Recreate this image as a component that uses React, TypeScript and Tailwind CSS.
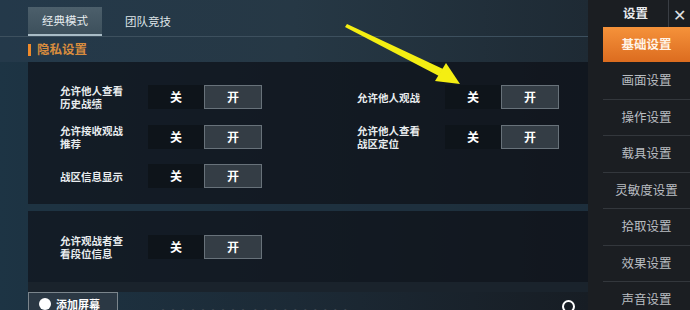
import React from "react";

const font = { fontFamily: '"Noto Sans CJK SC", "Noto Sans", sans-serif' };

function Toggle() {
  return (
    <div className="flex h-[24px] w-[114px] text-[12px] font-bold text-white">
      <div className="flex w-[56px] items-center justify-center bg-[#0e141a]">关</div>
      <div className="flex flex-1 items-center justify-center border border-[#68727a] bg-[#343d45]">开</div>
    </div>
  );
}

function Row({ label }: { label: string[] }) {
  return (
    <div className="flex items-center">
      <div className="w-[88px] text-[10.5px] font-bold leading-[13px] text-[#e8ecee]">
        {label.map((l) => (
          <div key={l}>{l}</div>
        ))}
      </div>
      <Toggle />
    </div>
  );
}

const menu = ["画面设置", "操作设置", "载具设置", "灵敏度设置", "拾取设置", "效果设置", "声音设置"];

function Arrow() {
  return (
    <svg className="pointer-events-none absolute left-0 top-0" width="690" height="310" aria-hidden>
      <polygon points="345,27 347,24 443,69 439,76" fill="#f4ee12" />
      <polygon points="460,84 435,81 446,63" fill="#f4ee12" />
    </svg>
  );
}

export default function App() {
  return (
    <div className="relative flex h-[310px] w-[690px] overflow-hidden bg-[#161b20]" style={font}>
      <div className="w-[588px] shrink-0 bg-gradient-to-r from-[#1d3444] via-[#1c2a36] to-[#171d24]">
        <div className="bg-gradient-to-r from-[#24394a] via-[#263845] to-[#1e2a34]">
          <div className="flex h-[37px] items-end border-b border-[#3d505e] pl-[28px]">
            <div className="flex h-[29px] w-[74px] items-center justify-center border-b-2 border-[#a9bcc6] bg-gradient-to-b from-[#4c5f6b] to-[#3d505c] text-[11.5px] text-[#e6ecef]">
              经典模式
            </div>
            <div className="flex h-[29px] items-center pl-[23px] text-[11.5px] text-[#dfe5e8]">团队竞技</div>
          </div>
          <div className="flex h-[25px] items-center gap-[6px] pl-[28px]">
            <div className="h-[12px] w-[3px] bg-[#f08a2a]" />
            <div className="text-[12.5px] font-bold text-[#d88c3e]">隐私设置</div>
          </div>
        </div>

        <div className="ml-[28px] grid grid-cols-[297px_1fr] gap-y-[14px] bg-[#10161d]/75 pb-[16px] pl-[32px] pt-[22px]">
          <Row label={["允许他人查看", "历史战绩"]} />
          <Row label={["允许他人观战"]} />
          <Row label={["允许接收观战", "推荐"]} />
          <Row label={["允许他人查看", "战区定位"]} />
          <Row label={["战区信息显示"]} />
        </div>

        <div className="ml-[28px] h-[7px] bg-[#1f3342]/80" />

        <div className="ml-[28px] bg-[#10161d]/75 pb-[22px] pl-[32px] pt-[23px]">
          <Row label={["允许观战者查", "看段位信息"]} />
        </div>

        <div className="ml-[28px] h-[10px] bg-[#1a232c]" />

        <div className="flex items-start pl-[28px]">
          <div className="flex h-[24px] w-[90px] items-center gap-[5px] border border-[#7b858c] bg-[#2b3844] pl-[10px] text-[11px] font-bold text-white">
            <div className="h-[12px] w-[12px] rounded-full bg-white" />
            添加屏幕
          </div>
          <div className="ml-[40px] mt-[10px] text-[10px] text-[#3c4650]">········· ··········</div>
          <div className="ml-auto mr-[13px] mt-[8px] h-[13px] w-[13px] rounded-full border-2 border-white" />
        </div>
      </div>

      <div className="flex flex-1 flex-col bg-[#1b1e22] pl-[15px]">
        <div className="flex h-[27px] shrink-0 items-center">
          <div className="flex w-[65px] items-center justify-center text-[12.5px] font-bold text-[#e8eaec]">设置</div>
          <div className="h-full w-px bg-[#3a3e44]" />
          <div className="flex flex-1 items-center justify-center text-[16px] text-[#e0e2e4]">✕</div>
        </div>
        <div className="flex h-[35px] shrink-0 items-center justify-center bg-gradient-to-b from-[#f5923a] to-[#dc6c1f] text-[12.5px] font-bold text-[#fff3e6]">
          基础设置
        </div>
        {menu.map((m, i) => (
          <div
            key={m}
            className={`flex h-[36.5px] shrink-0 items-center justify-center text-[12.5px] text-[#b9bdc1] ${i > 0 ? "border-t border-[#33373c]" : ""}`}
          >
            {m}
          </div>
        ))}
      </div>

      <Arrow />
    </div>
  );
}
